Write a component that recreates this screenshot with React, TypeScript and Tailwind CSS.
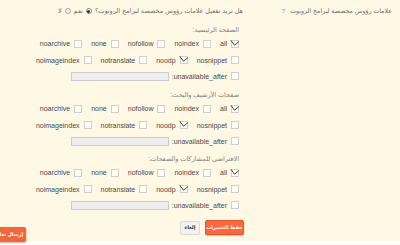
import React from "react";

const CB = ({ checked = false }: { checked?: boolean }) => (
  <span className="relative inline-block w-[8px] h-[8px] border border-[#d0d0d0] bg-[#fffdf6] shrink-0">
    {checked && (
      <svg className="absolute left-[-2px] top-[-2px]" width="10" height="9" viewBox="0 0 10 9">
        <path d="M0.8 1.2 L4.5 6.2 L9 2.6" fill="none" stroke="#444" strokeWidth="1" />
      </svg>
    )}
  </span>
);

const Item = ({ label, checked = false }: { label: string; checked?: boolean }) => (
  <div className="flex items-center gap-[4px]">
    <CB checked={checked} />
    <span className="text-[#4a4a4a]">{label}</span>
  </div>
);

const Section = ({ title, mt }: { title: string; mt: string }) => (
  <div className={mt}>
    <div className="h-[10px] leading-[10px] text-[6.5px] text-[#808080] whitespace-nowrap">{title}</div>
    <div className="flex items-center gap-[9px] h-[17px]">
      <Item label="all" checked />
      <Item label="noindex" />
      <Item label="nofollow" />
      <Item label="none" />
      <Item label="noarchive" />
    </div>
    <div className="flex items-center gap-[9px] h-[16px]">
      <Item label="nosnippet" />
      <Item label="noodp" checked />
      <Item label="notranslate" />
      <Item label="noimageindex" />
    </div>
    <div className="flex items-center gap-[3px] h-[16px]">
      <div className="flex items-center gap-[4px]">
        <CB />
        <span className="text-[#4a4a4a]">unavailable_after:</span>
      </div>
      <div className="w-[98px] h-[9px] bg-[#eeeeee] border border-[#cccccc]" />
    </div>
  </div>
);

export default function App() {
  return (
    <div
      className="relative w-[400px] h-[245px] bg-white overflow-hidden text-[7px] leading-none"
      style={{ fontFamily: '"Liberation Sans", "DejaVu Sans", Arial, sans-serif' }}
    >
      <div dir="rtl" className="flex h-[241px] bg-[#fff8e4]">
        <div className="w-[161px] shrink-0 pr-[8px] pt-[6px]">
          <div className="flex items-center gap-[5px] h-[10px] whitespace-nowrap">
            <span className="text-[6.3px] text-[#707070]">علامات رؤوس مخصصة لبرامج الروبوت</span>
            <span className="text-[6px] font-bold text-[#9bb0cf]">?</span>
          </div>
        </div>
        <div className="flex-1 pt-[4px]">
          <div className="flex items-center gap-[3px] h-[14px] text-[6.5px] text-[#707070] whitespace-nowrap -mr-[4px]">
            <span>هل تريد تفعيل علامات رؤوس مخصصة لبرامج الروبوت؟</span>
            <span className="relative w-[6px] h-[6px] rounded-full border border-[#888] bg-white flex items-center justify-center">
              <span className="w-[3px] h-[3px] rounded-full bg-[#333]" />
            </span>
            <span>نعم</span>
            <span className="w-[6px] h-[6px] rounded-full border border-[#aaa] bg-[#f2f2f2]" />
            <span>لا</span>
          </div>
          <Section title="الصفحة الرئيسية:" mt="mt-[7px]" />
          <Section title="صفحات الأرشيف والبحث:" mt="mt-[6px]" />
          <Section title="الافتراضي للمشاركات والصفحات:" mt="mt-[5px]" />
          <div className="flex items-center gap-[5px] mt-[7px] -mr-[5px]">
            <div className="w-[39px] h-[15px] rounded-[2px] bg-[#f8693b] border border-[#e2562a] shadow-[0_1px_1px_rgba(0,0,0,0.2)] flex items-center justify-center text-white font-bold text-[5px] whitespace-nowrap">
              حفظ التغييرات
            </div>
            <div className="w-[20px] h-[14px] rounded-[2px] bg-[#f3f3f3] border border-[#d8d8d8] flex items-center justify-center text-[#333] font-bold text-[5px] whitespace-nowrap">
              إلغاء
            </div>
          </div>
        </div>
      </div>
      <div
        dir="rtl"
        className="absolute left-[-10px] top-[227px] w-[36px] h-[15px] rounded-[2px] bg-[#f6643a] shadow-[0_1px_2px_rgba(0,0,0,0.3)] flex items-center justify-center text-white font-bold text-[5px] whitespace-nowrap"
      >
        إرسال تعليق
      </div>
    </div>
  );
}
